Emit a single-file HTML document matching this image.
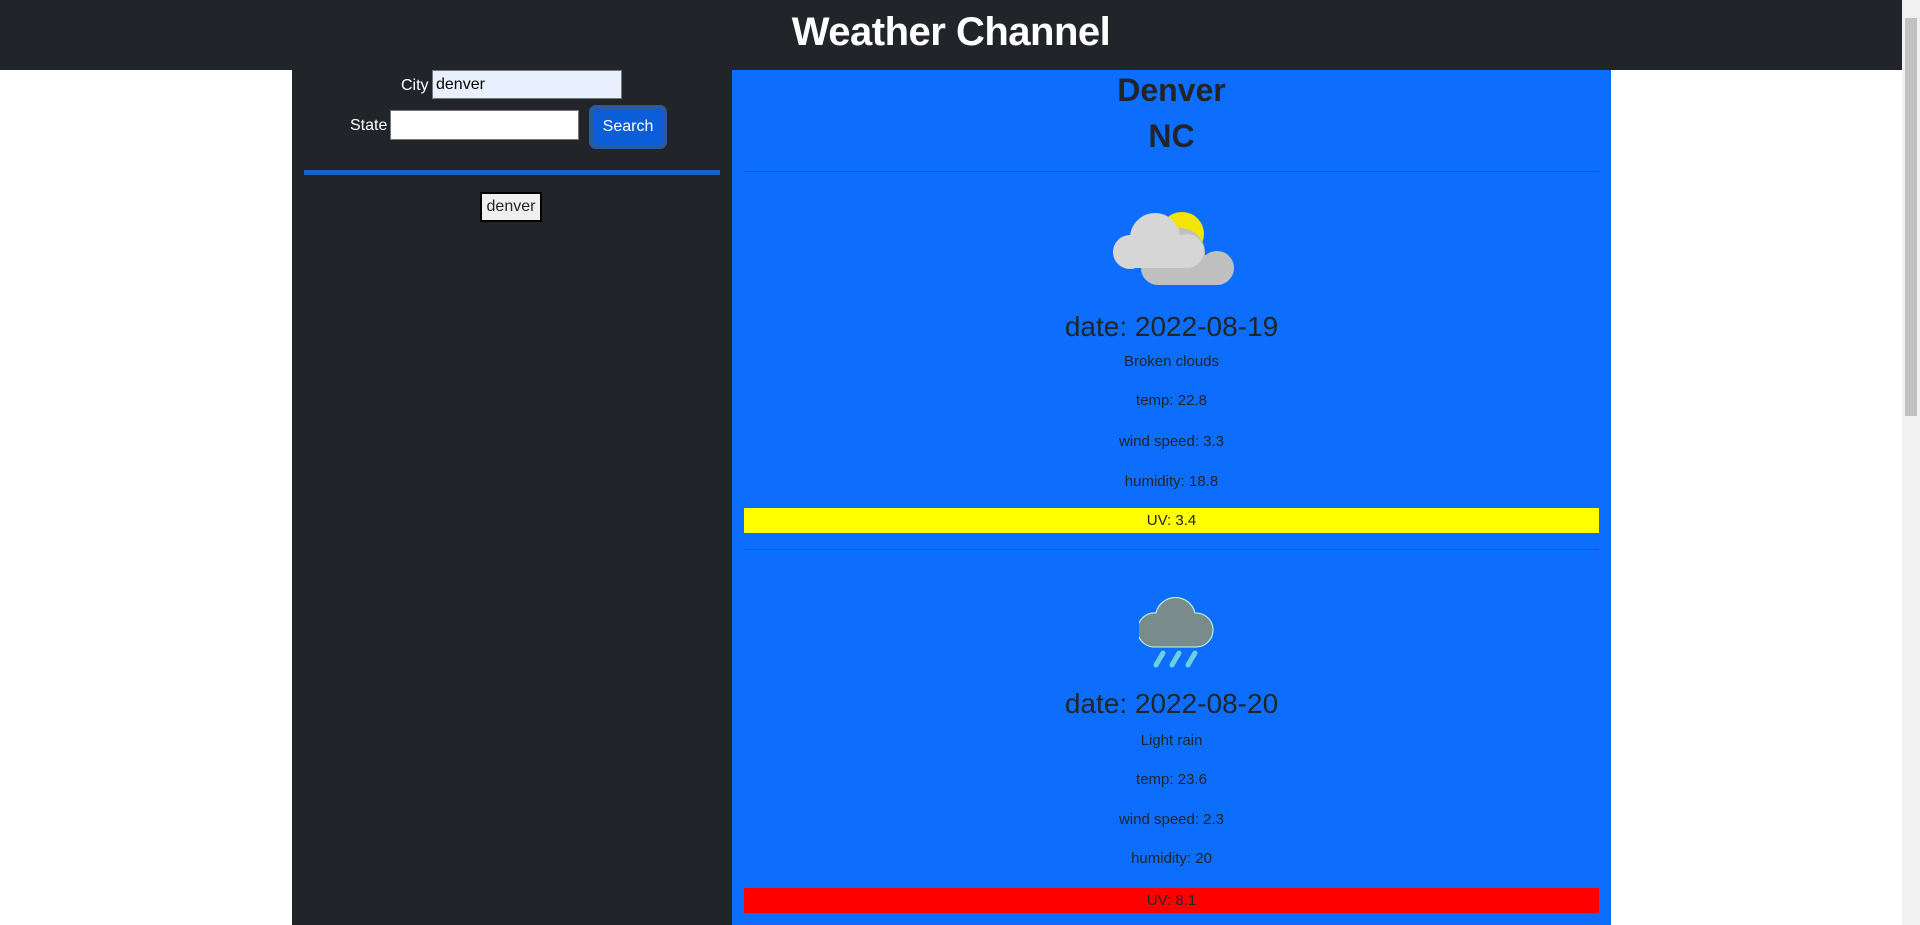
<!DOCTYPE html>
<html><head><meta charset="utf-8"><style>
*{box-sizing:border-box;margin:0;padding:0}
body{width:1920px;height:925px;overflow:hidden;background:#fff;font-family:"Liberation Sans",sans-serif;color:#212529;position:relative}
.a{position:absolute}
.hdr{left:0;top:0;width:1902px;height:70px;background:#212529;color:#fff;font-size:40px;font-weight:bold;text-align:center;line-height:64px;letter-spacing:-0.5px}
.side{left:292px;top:70px;width:440px;height:855px;background:#212529}
.main{left:732px;top:70px;width:879px;height:855px;background:#0d6efd}
.lbl{color:#fff;font-size:16px}
input{position:absolute;border:1px solid #767676;font-size:16px;font-family:"Liberation Sans",sans-serif;padding:0 3px}
.c{left:732px;width:879px;text-align:center;font-size:15px}
.hr{left:744px;width:855px;height:1px;background:#1b5bbf}
.uv{left:744px;width:855px;height:25px;text-align:center;font-size:15px;line-height:25px}
.sb{left:1902px;top:0;width:18px;height:925px;background:#f1f1f1}
</style></head><body>
<div class="a hdr">Weather Channel</div>
<div class="a side"></div>
<div class="a main"></div>
<div class="a lbl" style="left:401px;top:77px">City</div>
<input style="left:432px;top:70px;width:190px;height:29px;background:#e8f0fe" value="denver">
<div class="a lbl" style="left:350px;top:117px">State</div>
<input style="left:390px;top:110px;width:189px;height:30px;background:#fff">
<div class="a" style="left:589px;top:105px;width:78px;height:44px;border-radius:7px;background:#2a5aa0;padding:4px"><div style="width:70px;height:36px;border-radius:5px;background:#0b5ed7;color:#fff;font-size:16px;text-align:center;line-height:36px">Search</div></div>
<div class="a" style="left:304px;top:170px;width:416px;height:5px;background:#1b5fc9"></div>
<div class="a" style="left:480px;top:192px;width:62px;height:30px;background:#efefef;border:2px solid #000;font-size:16px;text-align:center;line-height:26px">denver</div>

<div class="a c" style="top:72px;font-size:32px;font-weight:bold">Denver</div>
<div class="a c" style="top:118px;font-size:32px;font-weight:bold">NC</div>
<div class="a hr" style="top:171px"></div>
<svg class="a" style="left:1100px;top:200px" width="140" height="90" viewBox="0 0 140 90">
<circle cx="82" cy="34" r="22" fill="#f2e600"/>
<g fill="#c0c0c0"><circle cx="80" cy="53" r="25"/><circle cx="117" cy="68" r="17"/><circle cx="58" cy="68" r="17"/><rect x="58" y="55" width="59" height="30"/></g>
<g fill="#d6d6d6"><circle cx="30" cy="52" r="17"/><circle cx="55" cy="38" r="25"/><circle cx="87" cy="51" r="17"/><rect x="30" y="45" width="57" height="23"/></g>
</svg>
<div class="a c" style="top:311px;font-size:28px">date: 2022-08-19</div>
<div class="a c" style="top:353px">Broken clouds</div>
<div class="a c" style="top:392px">temp: 22.8</div>
<div class="a c" style="top:433px">wind speed: 3.3</div>
<div class="a c" style="top:473px">humidity: 18.8</div>
<div class="a uv" style="top:508px;background:#ff0">UV: 3.4</div>
<div class="a hr" style="top:549px"></div>
<svg class="a" style="left:1139px;top:591px" width="80" height="80" viewBox="0 0 80 80">
<path d="M14 56 A17 17 0 0 1 17 22 A20 20 0 0 1 56 22 A17 17 0 0 1 58 56 Z" fill="#7a8b8b" stroke="#cfd" stroke-width="1"/>
<g stroke="#6ccfe0" stroke-width="5" stroke-linecap="round"><path d="M24 62 L17 74"/><path d="M40 62 L33 74"/><path d="M56 62 L49 74"/></g>
</svg>
<div class="a c" style="top:688px;font-size:28px">date: 2022-08-20</div>
<div class="a c" style="top:732px">Light rain</div>
<div class="a c" style="top:771px">temp: 23.6</div>
<div class="a c" style="top:811px">wind speed: 2.3</div>
<div class="a c" style="top:850px">humidity: 20</div>
<div class="a uv" style="top:888px;background:#f00">UV: 8.1</div>
<div class="a sb"><div style="position:absolute;left:3px;top:18px;width:12px;height:398px;background:#c1c1c1"></div></div>
</body></html>
